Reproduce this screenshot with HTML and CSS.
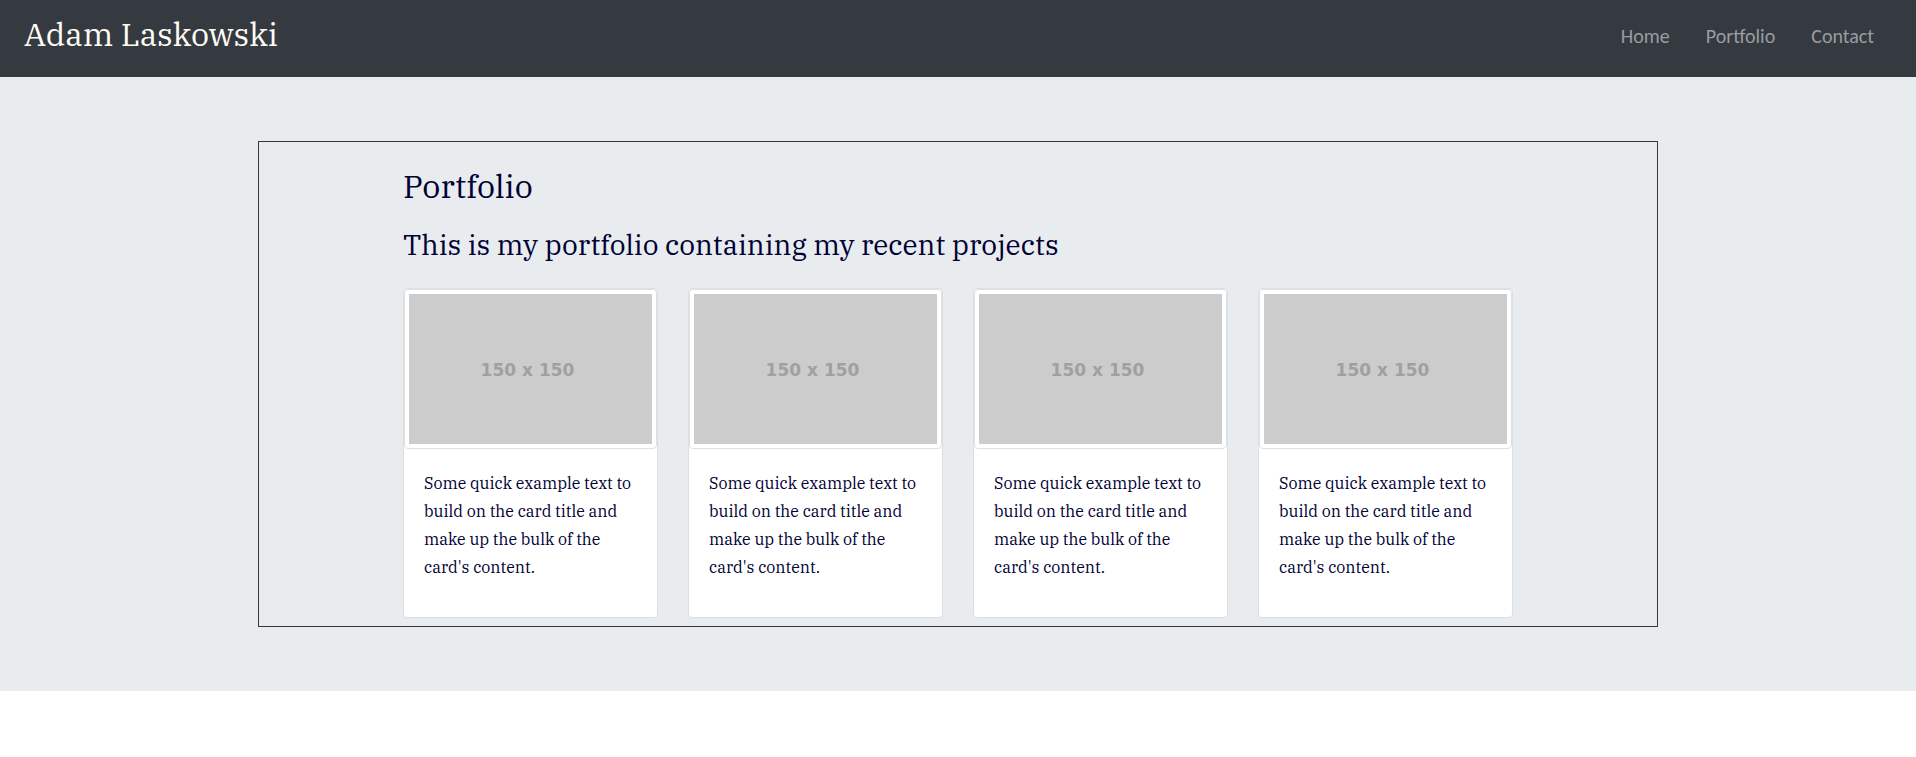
FILE: index.html
```
<!DOCTYPE html>
<html lang="en">
<head>
<meta charset="utf-8">
<meta name="viewport" content="width=device-width, initial-scale=1">
<title>Adam Laskowski</title>
<link rel="stylesheet" href="styles.css">
</head>
<body>
<header class="navbar">
  <a class="brand" href="#">Adam Laskowski</a>
  <nav class="nav">
    <a class="nav-link" href="#home">Home</a>
    <a class="nav-link" href="#portfolio">Portfolio</a>
    <a class="nav-link" href="#contact">Contact</a>
  </nav>
</header>
<main class="jumbotron">
  <section class="frame" id="portfolio">
    <div class="container">
      <h1 class="title">Portfolio</h1>
      <p class="subtitle">This is my portfolio containing my recent projects</p>
      <div class="cards">
        <article class="card">
          <div class="thumbnail"><div class="placeholder">150 x 150</div></div>
          <p class="card-text">Some quick example text to build on the card title and make up the bulk of the card's content.</p>
        </article>
        <article class="card">
          <div class="thumbnail"><div class="placeholder">150 x 150</div></div>
          <p class="card-text">Some quick example text to build on the card title and make up the bulk of the card's content.</p>
        </article>
        <article class="card">
          <div class="thumbnail"><div class="placeholder">150 x 150</div></div>
          <p class="card-text">Some quick example text to build on the card title and make up the bulk of the card's content.</p>
        </article>
        <article class="card">
          <div class="thumbnail"><div class="placeholder">150 x 150</div></div>
          <p class="card-text">Some quick example text to build on the card title and make up the bulk of the card's content.</p>
        </article>
      </div>
    </div>
  </section>
</main>
</body>
</html>
```
FILE: styles.css
```
* {
  box-sizing: border-box;
}

body {
  margin: 0;
  background: #fff;
  color: #000033;
  font-family: "IBM Plex Serif", "DejaVu Serif Condensed", "DejaVu Serif", serif;
  font-size: 16px;
  line-height: 28px;
}

.navbar {
  display: flex;
  justify-content: space-between;
  align-items: center;
  padding: 7px 42px 16px 24px;
  background: #343a40;
}

.brand {
  color: #fffaf5;
  font-size: 32px;
  line-height: 54px;
  text-decoration: none;
}

.nav {
  display: flex;
  gap: 36px;
  padding-top: 4px;
}

.nav-link {
  color: #999ca0;
  font-family: Carlito, Lato, sans-serif;
  font-size: 20px;
  text-decoration: none;
}

.jumbotron {
  padding: 64px 32px;
  background: #e8ecef;
}

.frame {
  max-width: 1400px;
  margin: 0 auto;
  padding: 23px 0 8px;
  border: 1px solid #343a40;
}

.container {
  max-width: 1140px;
  margin: 0 auto;
  padding: 0 15px;
}

.title {
  margin: 0 0 16px;
  font-size: 32px;
  font-weight: 400;
  line-height: 42px;
}

.subtitle {
  margin: 0 0 21px;
  font-size: 28px;
  line-height: 44px;
}

.cards {
  display: grid;
  grid-template-columns: repeat(auto-fit, minmax(240px, 1fr));
  gap: 30px;
}

.card {
  background: #fff;
  border: 1px solid #dcdfe2;
  border-radius: 4px;
}

.thumbnail {
  padding: 4px;
  border: 1px solid #dee2e6;
  border-radius: 4px;
}

.placeholder {
  display: flex;
  align-items: center;
  justify-content: center;
  height: 150px;
  padding: 2px 6px 0 0;
  background: #ccc;
  color: #a0a0a0;
  font-family: "DejaVu Sans", sans-serif;
  font-size: 17px;
  font-weight: 700;
}

.card-text {
  margin: 0;
  padding: 20px 20px 36px;
}
```
